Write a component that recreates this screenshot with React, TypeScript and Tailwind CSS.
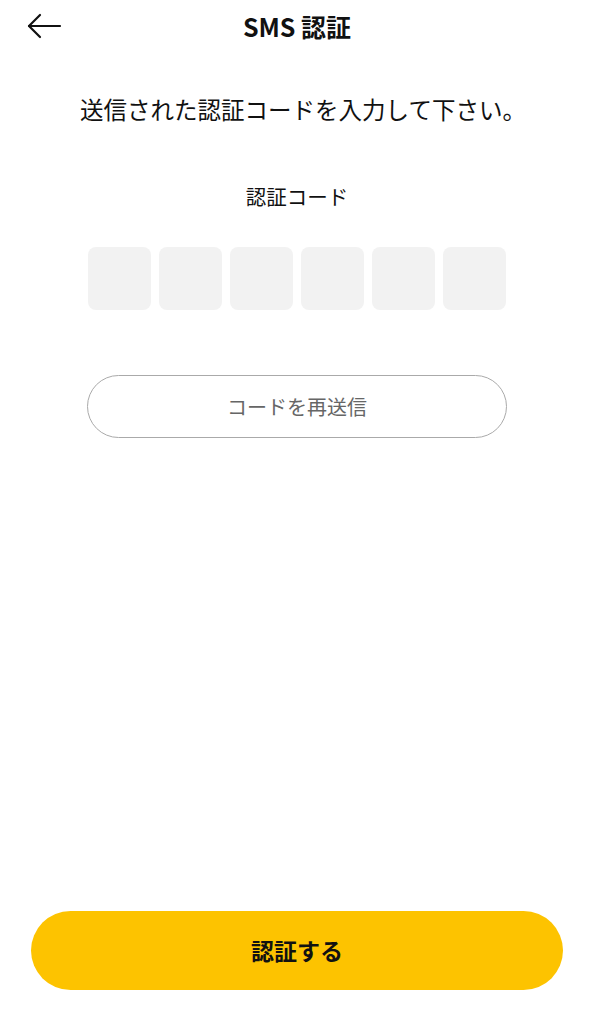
import React from "react";

export default function App() {
  const font = { fontFamily: '"Noto Sans CJK JP", "Noto Sans", sans-serif' };
  return (
    <div className="w-[594px] h-[1024px] bg-white flex flex-col text-[#111]" style={font}>
      <div className="relative h-[54px] flex items-center justify-center">
        <button className="absolute left-[26px] top-[12px] w-[36px] h-[28px] flex items-center justify-center">
          <svg width="36" height="28" viewBox="0 0 36 28" fill="none" stroke="#111" strokeWidth="2.2" strokeLinecap="round" strokeLinejoin="round">
            <path d="M34 14H3" />
            <path d="M14 3L3 14L14 25" />
          </svg>
        </button>
        <h1 className="text-[25px] font-semibold leading-none mt-[-2px] tracking-[0px]">SMS 認証</h1>
      </div>
      <p className="mt-[39px] pl-[12px] text-center text-[23.5px] leading-[32px]">送信された認証コードを入力して下さい。</p>
      <p className="mt-[57px] text-center text-[20.5px] leading-[28px]">認証コード</p>
      <div className="mt-[37px] flex justify-center gap-[8px]">
        {[0, 1, 2, 3, 4, 5].map((i) => (
          <div key={i} className="w-[63px] h-[63px] rounded-[8px] bg-[#f2f2f2]" />
        ))}
      </div>
      <div className="mt-[65px] flex justify-center">
        <button className="w-[420px] h-[63px] rounded-full border-[1.5px] border-[#aaaaaa] text-[20px] text-[#666] bg-white">
          コードを再送信
        </button>
      </div>
      <div className="mt-auto mb-[34px] px-[31px]">
        <button className="w-full h-[79px] rounded-full bg-[#fdc300] text-[23px] font-bold text-[#111]">
          認証する
        </button>
      </div>
    </div>
  );
}
